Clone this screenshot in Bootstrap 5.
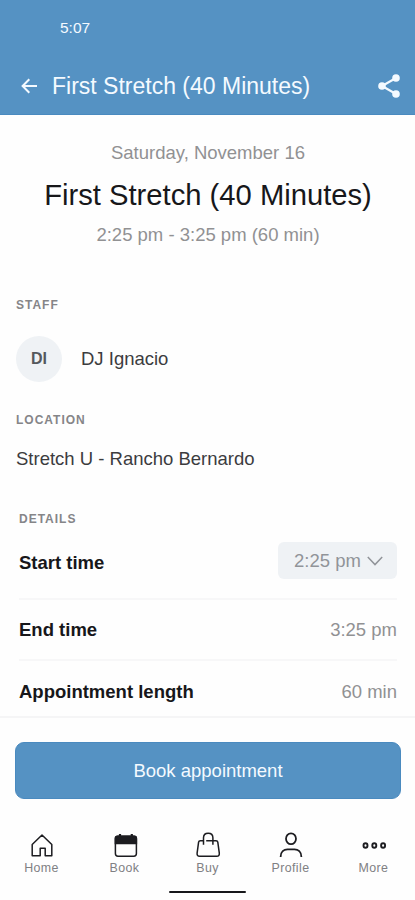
<!DOCTYPE html>
<html lang="en">
<head>
<meta charset="utf-8">
<meta name="viewport" content="width=device-width, initial-scale=1">
<title>First Stretch (40 Minutes)</title>
<link href="https://cdn.jsdelivr.net/npm/bootstrap@5.3.0/dist/css/bootstrap.min.css" rel="stylesheet">
<style>
  body { font-family: "Liberation Sans", Arial, sans-serif; font-size: 18.5px; line-height: 24px; color: #3c3c3e; background: #fefefe; }
  svg { display: block; flex: none; }
  .screen { height: 900px; overflow: hidden; }
  .app-header { background: #5592c3; height: 115px; color: #f4faff; border-bottom: 1px solid #4a8abf; }
  .status-bar { height: 56px; padding-left: 60px; font-size: 15.5px; }
  .app-bar { height: 59px; padding: 0 14px 0 21px; }
  .app-title { font-size: 23px; line-height: 28px; margin-left: 14px; }
  .summary { height: 168px; padding: 26px 0 0 1px; color: #919193; }
  .summary h1 { font-size: 29.2px; line-height: 36px; color: #17171a; margin: 12px 0 10px; }
  .section-label { font-size: 12px; line-height: 16px; letter-spacing: 1px; font-weight: 700; color: #858588; margin: 0; }
  .avatar { width: 46px; height: 46px; background: #eff2f5; font-size: 16px; font-weight: 700; color: #55585d; margin-right: 19px; }
  .staff { padding: 14px 16px 0; height: 114px; }
  .staff-row { margin-top: 23px; }
  .place { padding: 15px 16px 0; height: 99px; }
  .place-name { margin-top: 19px; }
  .details { padding: 15px 18px 0 19px; height: 220px; }
  .detail-row { border-bottom: 2px solid #f7f7f8; }
  .detail-row dt { color: #17171a; }
  .detail-row dd { color: #919193; margin: 0; }
  .row-start { height: 73px; }
  .row-end { height: 61px; }
  .row-length { height: 62px; border: 0; }
  .time-pick { width: 119px; height: 37px; border: 0; border-radius: 6px; background: #eff2f5; color: #919499; padding: 0 0 0 16px; margin-bottom: 4px; gap: 6px; }
  .book-area { border-top: 2px solid #f5f5f6; height: 99px; padding: 24px 14px 0 15px; }
  .book-btn { height: 57px; border-radius: 9px; background: #5592c3; color: #f4faff; font-size: 18.5px; border: 1px solid #4a8abf; }
  .book-btn:hover { background: #4a8abf; color: #fff; }
  .tab-bar { height: 76px; padding-top: 17px; }
  .tab-bar a { width: 83px; color: #808083; font-size: 12.4px; line-height: 16px; letter-spacing: .4px; }
  .tab-bar svg { color: #1c1c20; margin-bottom: 2px; }
  .home-line { width: 77px; height: 2px; background: #17171a; border-radius: 1px; }
</style>
</head>
<body>
<div class="screen d-flex flex-column">
  <header class="app-header">
    <div class="status-bar d-flex align-items-center">5:07</div>
    <div class="app-bar d-flex align-items-center">
      <svg width="17" height="16" viewBox="0 0 17 16" fill="none" stroke="currentColor" stroke-width="2"><path d="M16 8H2M8.300 1.300 1.600 8l6.700 6.700"/></svg>
      <span class="app-title">First Stretch (40 Minutes)</span>
      <svg class="ms-auto" width="24" height="24" viewBox="0 0 24 24" fill="currentColor"><path d="M19 4 5 12l14 8" fill="none" stroke="currentColor" stroke-width="2.200"/><circle cx="19" cy="4" r="3.800"/><circle cx="5" cy="12" r="3.800"/><circle cx="19" cy="20" r="3.800"/></svg>
    </div>
  </header>

  <section class="summary text-center">
    <div>Saturday, November 16</div>
    <h1 class="fw-normal">First Stretch (40 Minutes)</h1>
    <div>2:25 pm - 3:25 pm (60 min)</div>
  </section>

  <section class="staff">
    <h2 class="section-label">STAFF</h2>
    <div class="staff-row d-flex align-items-center">
      <div class="avatar rounded-circle d-flex align-items-center justify-content-center">DI</div>
      <div>DJ Ignacio</div>
    </div>
  </section>

  <section class="place">
    <h2 class="section-label">LOCATION</h2>
    <div class="place-name">Stretch U - Rancho Bernardo</div>
  </section>

  <section class="details">
    <h2 class="section-label">DETAILS</h2>
    <dl class="mb-0">
      <div class="detail-row row-start d-flex align-items-center justify-content-between">
        <dt>Start time</dt>
        <dd><button type="button" class="time-pick d-flex align-items-center">2:25 pm
          <svg width="16" height="10" viewBox="0 0 16 10" fill="none" stroke="currentColor" stroke-width="1.500"><path d="m.8 1 7.200 7.600L15.200 1"/></svg></button></dd>
      </div>
      <div class="detail-row row-end d-flex align-items-center justify-content-between">
        <dt>End time</dt><dd>3:25 pm</dd>
      </div>
      <div class="detail-row row-length d-flex align-items-center justify-content-between">
        <dt>Appointment length</dt><dd>60 min</dd>
      </div>
    </dl>
  </section>

  <div class="book-area">
    <button type="button" class="book-btn btn w-100">Book appointment</button>
  </div>

  <nav class="tab-bar d-flex" aria-label="Main">
    <a href="#" class="d-flex flex-column align-items-center text-decoration-none">
      <svg width="26" height="26" viewBox="0 0 26 26" fill="none" stroke="currentColor" stroke-width="1.500" stroke-linejoin="round"><path d="M3.200 12.500 13 3l9.800 9.500v11.300h-6.600v-7.600h-5v7.600h-8z"/></svg>Home</a>
    <a href="#" class="d-flex flex-column align-items-center text-decoration-none">
      <svg width="26" height="26" viewBox="0 0 26 26" fill="none" stroke="currentColor" stroke-width="1.500"><rect x="3.400" y="4.200" width="21" height="20" rx="2.600"/><path d="M3.400 11.500V6.300q0-2.100 2.100-2.100h16.800q2.100 0 2.100 2.100v5.200z" fill="currentColor"/><path d="M8 2v4M19.800 2v4" stroke-width="2.200"/></svg>Book</a>
    <a href="#" class="d-flex flex-column align-items-center text-decoration-none">
      <svg width="26" height="26" viewBox="0 0 26 26" fill="none" stroke="currentColor" stroke-width="1.500" stroke-linejoin="round"><path d="M8.500 12.800V5.800q0-4.600 4.700-4.600t4.700 4.600v7M8.500 8.700H5.400q-1.600 0-1.800 1.500L2.100 21.100q-.3 3.200 2.600 3.200h17q2.900 0 2.600-3.200L22.800 10.200q-.2-1.500-1.800-1.500h-9.800"/></svg>Buy</a>
    <a href="#" class="d-flex flex-column align-items-center text-decoration-none">
      <svg width="26" height="26" viewBox="0 0 26 26" fill="none" stroke="currentColor" stroke-width="1.800"><ellipse cx="13" cy="6.800" rx="5" ry="5.400"/><path d="M2.600 25C2.600 19.500 6 17.400 9.500 17.400h7c3.500 0 6.900 2.100 6.900 7.600"/></svg>Profile</a>
    <a href="#" class="d-flex flex-column align-items-center text-decoration-none">
      <svg width="26" height="26" viewBox="0 0 26 26" fill="none" stroke="currentColor" stroke-width="1.900"><ellipse cx="4.500" cy="13.500" rx="2" ry="2.300"/><ellipse cx="13.300" cy="13.500" rx="2" ry="2.300"/><ellipse cx="22.100" cy="13.500" rx="2" ry="2.300"/></svg>More</a>
  </nav>
  <div class="home-line mx-auto"></div>
</div>
<script src="https://cdn.jsdelivr.net/npm/bootstrap@5.3.0/dist/js/bootstrap.bundle.min.js"></script>
</body>
</html>
